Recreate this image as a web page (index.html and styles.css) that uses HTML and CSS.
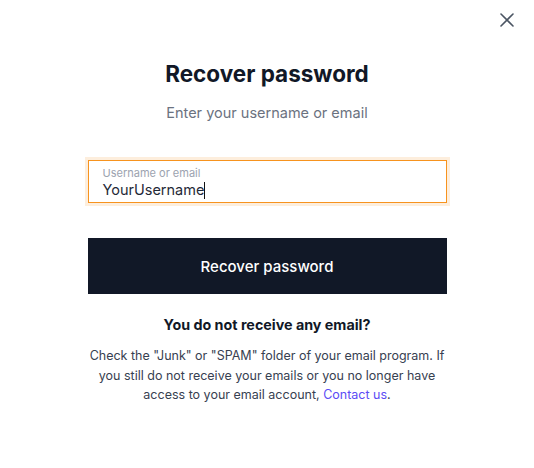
FILE: index.html
```html
<!DOCTYPE html>
<html lang="en">
<head>
<meta charset="utf-8">
<title>Recover password</title>
<link rel="stylesheet" href="styles.css">
</head>
<body>
<div class="modal">
  <button class="close" aria-label="Close">
    <svg width="16" height="16" viewBox="0 0 16 16" fill="none" stroke="#4b5563" stroke-width="1.6" stroke-linecap="round"><path d="M2 2L14 14M14 2L2 14"/></svg>
  </button>
  <div class="content">
    <h1 class="title">Recover password</h1>
    <p class="subtitle">Enter your username or email</p>
    <div class="field">
      <label class="field-label">Username or email</label>
      <div class="field-value">YourUsername<span class="caret"></span></div>
    </div>
    <button class="submit">Recover password</button>
    <h2 class="help-title">You do not receive any email?</h2>
    <p class="help-text">Check the "Junk" or "SPAM" folder of your email program. If you still do not receive your emails or you no longer have access to your email account, <a href="#" class="link">Contact us</a>.</p>
  </div>
</div>
</body>
</html>
```

FILE: styles.css
```css
* { box-sizing: border-box; }
html, body { margin: 0; padding: 0; background: #fff; }
body { font-family: Inter, "Noto Sans", sans-serif; color: #111827; }
.modal { position: relative; width: 534px; height: 468px; }
.close { position: absolute; top: 12px; right: 19px; width: 16px; height: 16px; padding: 0; border: 0; background: none; display: flex; }
.content { width: 359px; margin: 0 auto; padding-top: 60px; display: flex; flex-direction: column; align-items: stretch; text-align: center; }
.title { margin: 0; font-size: 22.5px; line-height: 28px; font-weight: 700; color: #111827; }
.subtitle { margin: 15px 0 0; font-size: 14.5px; line-height: 20px; color: #6b7280; }
.field { margin-top: 37px; height: 43px; border: 1px solid #f7931e; box-shadow: 0 0 0 3px #fdeedd; text-align: left; padding: 6px 14px 0; }
.field-label { display: block; font-size: 11px; line-height: 13px; color: #9ca3af; }
.field-value { font-size: 14.5px; line-height: 20px; color: #1f2937; display: flex; align-items: center; }
.caret { display: inline-block; width: 1px; height: 17px; background: #111; }
.submit { margin-top: 35px; height: 56px; border: 0; background: #111827; color: #fff; font-family: inherit; font-size: 15px; font-weight: 500; }
.help-title { margin: 21px 0 0; font-size: 14.3px; line-height: 20px; font-weight: 700; color: #111827; }
.help-text { margin: 11px 0 0; font-size: 12.5px; line-height: 19.5px; color: #374151; }
.link { color: #5b4cf5; text-decoration: none; }
```
